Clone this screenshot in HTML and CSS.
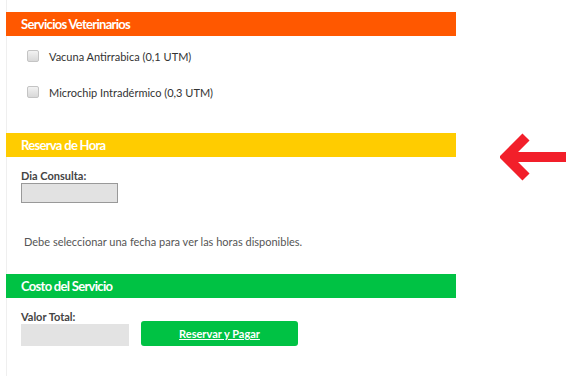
FILE: index.html
```html
<!doctype html>
<html>
  <head>
    <meta charset="utf-8">
    <title>Reserva veterinaria</title>
    <link rel="stylesheet" href="styles.css">
  </head>
  <body>
    <div class="panel">
      <h2 class="bar bar-orange">Servicios Veterinarios</h2>
      <ul class="services">
        <li><span class="check"></span>Vacuna Antirrabica (0,1 UTM)</li>
        <li><span class="check"></span>Microchip Intradérmico (0,3 UTM)</li>
      </ul>

      <h2 class="bar bar-yellow">Reserva de Hora</h2>
      <div class="booking">
        <label class="field-label">Dia Consulta:</label>
        <div class="date-input"></div>
        <p class="notice">Debe seleccionar una fecha para ver las horas disponibles.</p>
      </div>

      <h2 class="bar bar-green">Costo del Servicio</h2>
      <div class="cost">
        <div class="total">
          <label class="field-label">Valor Total:</label>
          <div class="total-box"></div>
        </div>
        <a class="pay" href="#">Reservar y Pagar</a>
      </div>
    </div>

    <svg class="arrow" width="70" height="50" viewBox="0 0 70 50">
      <path d="M66 24 H6 M26 4 L6 24 L26 44" fill="none" stroke="#f21f2a" stroke-width="10" stroke-linejoin="miter"/>
    </svg>
  </body>
</html>
```

FILE: styles.css
```css
html {
  background-color: #fff;
}
body {
  margin: 0;
  font-family: Lato, "Open Sans", sans-serif;
  font-size: 11px;
  color: #333;
}
.panel {
  width: 449px;
  min-height: 364px;
  margin-left: 6px;
  padding-top: 12px;
  border-left: 1px solid #efefef;
}
.bar {
  margin: 0 0 0 -1px;
  height: 24px;
  line-height: 24px;
  padding-left: 15px;
  color: #fff;
  font-size: 13px;
  font-weight: bold;
  letter-spacing: -0.7px;
}
.bar-orange {
  background-color: #ff5800;
}
.bar-yellow {
  background-color: #ffcc00;
}
.bar-green {
  background-color: #00c244;
}

.services {
  list-style-type: none;
  margin: 0 0 35px 0;
  padding: 14px 0 0 20px;
}
.services li {
  display: flex;
  align-items: center;
  height: 12px;
  margin-bottom: 24px;
}
.services li:last-child {
  margin-bottom: 0;
}
.check {
  width: 10px;
  height: 10px;
  margin-right: 10px;
  border: 1px solid #c4c4c4;
  border-radius: 2px;
  background: linear-gradient(#f2f2f2, #d8d8d8);
}

.booking {
  padding: 12px 0 25px 14px;
}
.field-label {
  display: block;
  line-height: 14px;
  font-weight: bold;
  color: #444;
}
.date-input {
  width: 95px;
  height: 18px;
  border: 1px solid #999;
  background-color: #e2e2e2;
}
.notice {
  margin: 32px 0 0 3px;
  line-height: 14px;
  color: #555;
}

.cost {
  display: flex;
  align-items: flex-end;
  gap: 12px;
  padding: 12px 0 0 14px;
}
.total-box {
  width: 108px;
  height: 22px;
  background-color: #e3e3e3;
}
.pay {
  width: 157px;
  height: 25px;
  line-height: 25px;
  text-align: center;
  background-color: #00c244;
  border-radius: 3px;
  color: #fff;
  font-weight: bold;
  text-decoration: underline;
}

.arrow {
  position: absolute;
  left: 500px;
  top: 133px;
}
```
